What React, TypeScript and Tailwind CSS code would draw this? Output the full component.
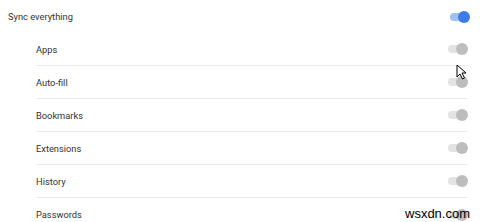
import React from "react";

function Toggle({ on }: { on?: boolean }) {
  return (
    <div className="relative w-[22px] h-[12px] flex items-center">
      <div className={`w-[18px] h-[8px] rounded-full ml-[2px] ${on ? "bg-[#9fc0f5]" : "bg-[#e3e3e3]"}`} />
      <div className={`absolute right-0 top-0 w-[12px] h-[12px] rounded-full ${on ? "bg-[#3c7ce8]" : "bg-[#bdbdbd]"}`} />
    </div>
  );
}

const items = ["Apps", "Auto-fill", "Bookmarks", "Extensions", "History", "Passwords"];

export default function App() {
  return (
    <div className="relative w-[480px] h-[222px] bg-white overflow-hidden text-[9.3px] text-[#333]" style={{ fontFamily: "Roboto, sans-serif" }}>
      <div className="h-[33px] flex items-center justify-between pl-[8px] pr-[10px]">
        <span className="pt-[1px]">Sync everything</span>
        <Toggle on />
      </div>
      <div className="ml-[36px] mr-[12px]">
        {items.map((t, i) => (
          <div key={t} className={`h-[33px] flex items-center justify-between ${i < items.length - 1 ? "border-b border-[#ebebeb]" : ""}`}>
            <span className="pt-[1px]">{t}</span>
            <Toggle />
          </div>
        ))}
      </div>
      <svg className="absolute left-[456px] top-[64px]" width="12" height="16" viewBox="0 0 12 16">
        <path d="M1 1 L1 13 L4 10 L6.5 15 L8.5 14 L6 9 L10 9 Z" fill="white" stroke="black" strokeWidth="1" strokeLinejoin="round" />
      </svg>
      <div className="absolute left-[405px] top-[204px] text-[13px] text-black" style={{ fontFamily: "Arial, 'Liberation Sans', sans-serif" }}>
        wsxdn.com
      </div>
    </div>
  );
}
